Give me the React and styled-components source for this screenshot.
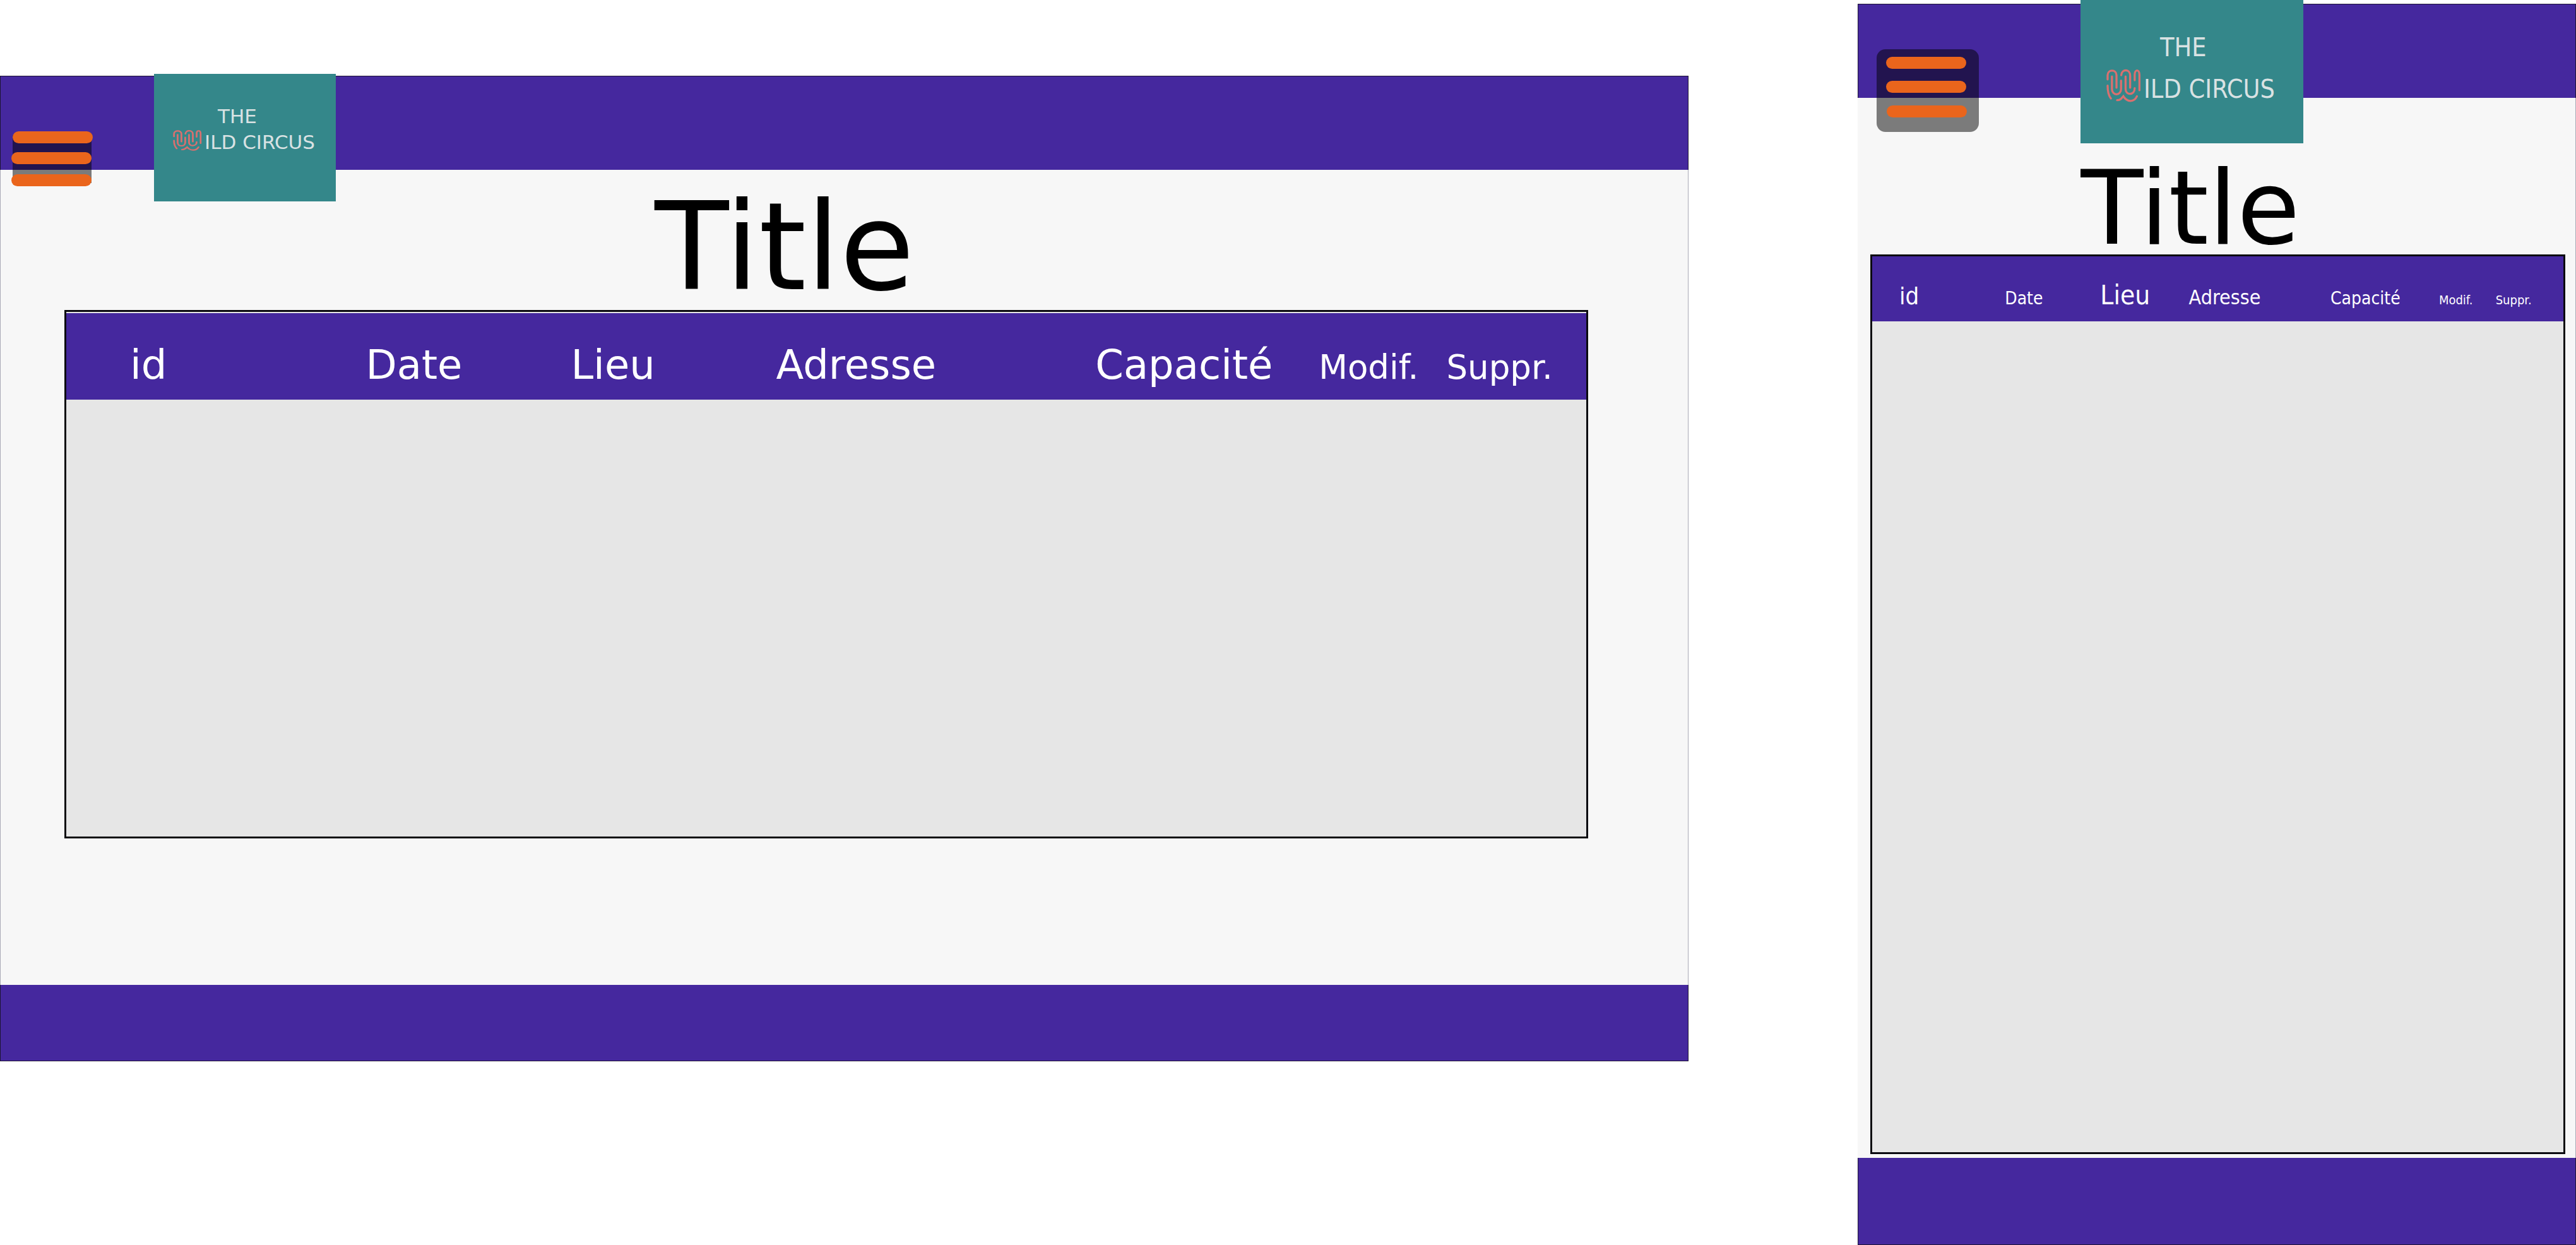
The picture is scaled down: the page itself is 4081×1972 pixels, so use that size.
import React from "react";
import styled, { createGlobalStyle } from "styled-components";

const violet = "#45289e";
const ink = "#0b0b10";
const orange = "#ea651c";

const GlobalStyle = createGlobalStyle`
  *, *::before, *::after { box-sizing: border-box; }
  body {
    margin: 0;
    background: #fff;
    font-family: "DejaVu Sans", sans-serif;
  }
`;

const Board = styled.div`
  display: grid;
  grid-template-columns: 2675fr 1138fr;
  column-gap: 268px;
  align-items: start;
`;

const Screen = styled.section`
  display: flex;
  flex-direction: column;
  margin-top: ${(p) => (p.$compact ? 6 : 120)}px;
  background: #f7f7f7;
  font-family: ${(p) =>
    p.$compact
      ? '"DejaVu Sans Condensed", "DejaVu Sans", sans-serif'
      : '"DejaVu Sans", sans-serif'};
`;

const TopBar = styled.header`
  position: relative;
  z-index: 1;
  display: flex;
  align-items: flex-start;
  height: 149px;
  padding-left: ${(p) => (p.$compact ? 29 : 17)}px;
  background: ${violet};
  border: 1px solid #1d1433;
  border-bottom: 0;
`;

const MenuButton = styled.button`
  display: block;
  margin: ${(p) => (p.$compact ? 71 : 87)}px 0 0;
  padding: 0;
  border: 0;
  background: none;
  cursor: pointer;

  svg { display: block; }
`;

const Logo = styled.a`
  display: block;
  width: ${(p) => (p.$compact ? 353 : 288)}px;
  height: ${(p) => (p.$compact ? 227 : 202)}px;
  margin-top: ${(p) => (p.$compact ? -7 : -4)}px;
  margin-left: ${(p) => (p.$compact ? 161 : 97)}px;
  padding: ${(p) => (p.$compact ? "42px 0 0 41px" : "47px 0 0 30px")};
  background: #34878a;
  color: #d9e2e3;
  font-size: ${(p) => (p.$compact ? 41 : 31)}px;
  line-height: ${(p) => (p.$compact ? 66 : 41)}px;
  text-decoration: none;
  white-space: nowrap;
`;

const LogoTop = styled.span`
  display: block;
  padding-left: ${(p) => (p.$compact ? 85 : 71)}px;
`;

const LogoBottom = styled.span`
  display: flex;
  align-items: flex-start;
  gap: 4px;
`;

const Content = styled.main`
  padding: ${(p) => (p.$compact ? "0 16px 6px 20px" : "0 158px 232px 101px")};
  border: solid #a9a9b6;
  border-width: ${(p) => (p.$compact ? "0 1px 0 0" : "0 1px")};
`;

const Title = styled.h1`
  margin: 0;
  padding: ${(p) => (p.$compact ? "105px 87px 3px 0" : "27px 132px 3px 0")};
  color: #000;
  font-family: "DejaVu Sans", sans-serif;
  font-size: ${(p) => (p.$compact ? 162 : 192)}px;
  line-height: ${(p) => (p.$compact ? 140 : 192)}px;
  font-weight: 400;
  text-align: center;
`;

const TableFrame = styled.div`
  min-height: ${(p) => (p.$compact ? 1425 : 837)}px;
  padding-top: ${(p) => (p.$compact ? 0 : 2)}px;
  border: 3px solid ${ink};
  background: #e6e6e6;
`;

const Table = styled.table`
  width: 100%;
  table-layout: fixed;
  border-collapse: collapse;
  background: ${violet};
  color: #fff;
`;

const HeadCell = styled.th`
  width: ${(p) => p.$width}%;
  padding: ${(p) => (p.$compact ? "41px 0 13px" : "50px 0 19px")};
  font-size: ${(p) => p.$size}px;
  line-height: ${(p) => (p.$compact ? 42 : 64)}px;
  font-weight: 400;
  text-align: left;
  vertical-align: baseline;
  white-space: nowrap;

  &:first-child { padding-left: ${(p) => (p.$compact ? 43 : 101)}px; }
`;

const BottomBar = styled.footer`
  height: ${(p) => (p.$compact ? 138 : 121)}px;
  background: ${violet};
  border: 1px solid #1d1433;
  border-top: 0;
`;

const wideColumns = [
  { label: "id", width: 19.7, size: 64 },
  { label: "Date", width: 13.5, size: 64 },
  { label: "Lieu", width: 13.5, size: 64 },
  { label: "Adresse", width: 21, size: 64 },
  { label: "Capacité", width: 14.7, size: 64 },
  { label: "Modif.", width: 8.4, size: 53 },
  { label: "Suppr.", width: 9.2, size: 53 },
];

const compactColumns = [
  { label: "id", width: 19.2, size: 38 },
  { label: "Date", width: 13.8, size: 28 },
  { label: "Lieu", width: 12.8, size: 42 },
  { label: "Adresse", width: 20.5, size: 32 },
  { label: "Capacité", width: 15.7, size: 28 },
  { label: "Modif.", width: 8.2, size: 20 },
  { label: "Suppr.", width: 9.8, size: 20 },
];

function WideMenuIcon() {
  return (
    <svg width="129" height="87" viewBox="0 0 129 87" aria-hidden="true">
      <rect x="2" y="6" width="125" height="76" fill="#000" fillOpacity="0.5" />
      <rect x="2" y="0" width="127" height="19" rx="9.5" fill={orange} />
      <rect x="0" y="33" width="127" height="19" rx="9.5" fill={orange} />
      <rect x="0" y="68" width="127" height="19" rx="9.5" fill={orange} />
    </svg>
  );
}

function CompactMenuIcon() {
  return (
    <svg width="162" height="131" viewBox="0 0 162 131" aria-hidden="true">
      <rect width="162" height="131" rx="14" fill="#000" fillOpacity="0.5" />
      <rect x="15" y="12" width="127" height="19" rx="9.5" fill={orange} />
      <rect x="15" y="50" width="127" height="19" rx="9.5" fill={orange} />
      <rect x="16" y="89" width="127" height="19" rx="9.5" fill={orange} />
    </svg>
  );
}

function Emblem({ width, height }) {
  return (
    <svg
      width={width}
      height={height}
      viewBox="51 206 168 164"
      preserveAspectRatio="none"
      fill="none"
      stroke="#d9706f"
      strokeWidth="10"
      strokeLinecap="round"
      aria-hidden="true"
    >
      <path d="M57 260V240C57 210 100 210 100 240V300" />
      <path d="M78 246V306C78 340 122 340 122 306V266" />
      <path d="M123 240C126 208 166 208 166 242V300" />
      <path d="M144 246V306C144 338 188 338 188 302" />
      <path d="M188 264V238C188 210 211 210 211 238V312" />
      <path d="M57 290C57 320 62 338 73 352" />
      <path d="M103 360C118 360 124 352 133 341C152 372 186 370 199 341" />
    </svg>
  );
}

function EventScreen({ compact, columns }) {
  return (
    <Screen $compact={compact}>
      <TopBar $compact={compact}>
        <MenuButton type="button" aria-label="Menu" $compact={compact}>
          {compact ? <CompactMenuIcon /> : <WideMenuIcon />}
        </MenuButton>
        <Logo href="#" $compact={compact}>
          <LogoTop $compact={compact}>THE</LogoTop>
          <LogoBottom>
            <Emblem width={compact ? 55 : 46} height={compact ? 54 : 34} />
            <span>ILD CIRCUS</span>
          </LogoBottom>
        </Logo>
      </TopBar>
      <Content as={compact ? "div" : "main"} $compact={compact}>
        <Title $compact={compact}>Title</Title>
        <TableFrame $compact={compact}>
          <Table>
            <thead>
              <tr>
                {columns.map((column) => (
                  <HeadCell
                    key={column.label}
                    scope="col"
                    $compact={compact}
                    $width={column.width}
                    $size={column.size}
                  >
                    {column.label}
                  </HeadCell>
                ))}
              </tr>
            </thead>
          </Table>
        </TableFrame>
      </Content>
      <BottomBar $compact={compact} />
    </Screen>
  );
}

export default function App() {
  return (
    <>
      <GlobalStyle />
      <Board>
        <EventScreen compact={false} columns={wideColumns} />
        <EventScreen compact columns={compactColumns} />
      </Board>
    </>
  );
}
